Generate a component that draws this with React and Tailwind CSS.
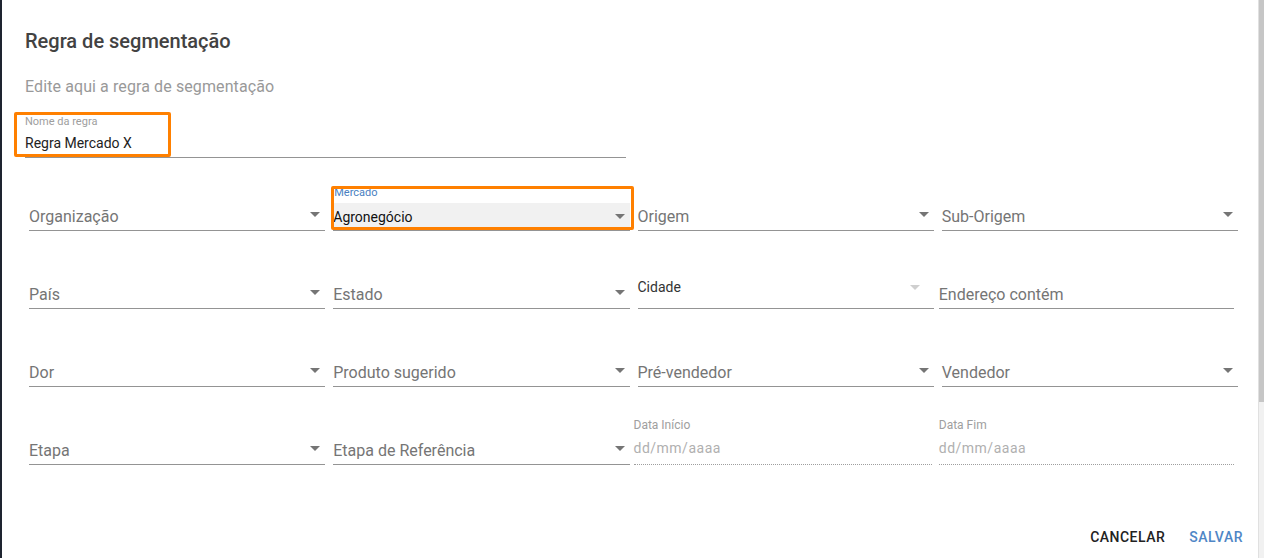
import React from "react";

function Arrow({ light }) {
  return (
    <svg width="10" height="5" viewBox="0 0 10 5" className="shrink-0">
      <path d="M0 0 L10 0 L5 5 Z" fill={light ? "#cfcfcf" : "#757575"} />
    </svg>
  );
}

function Select({ label, className = "" }) {
  return (
    <div className={`h-[47px] flex items-end border-b border-[#949494] ${className}`}>
      <div className="flex-1 flex items-center justify-between pb-[3px] pr-[5px]">
        <span className="text-[16px] leading-[20px] text-[#757575]">{label}</span>
        <span className="-mt-[6px]">
          <Arrow />
        </span>
      </div>
    </div>
  );
}

function DateField({ label, className = "" }) {
  return (
    <div className={`h-[47px] flex flex-col justify-end border-b border-dotted border-[#9e9e9e] ${className}`}>
      <span className="text-[12px] leading-[14px] text-[#9e9e9e]">{label}</span>
      <span className="text-[14px] leading-[18px] text-[#b0b0b0] tracking-[0.5px] mt-[7px] mb-[7px]">
        dd/mm/aaaa
      </span>
    </div>
  );
}

export default function App() {
  return (
    <div
      className="w-[1264px] h-[558px] flex bg-white overflow-hidden"
      style={{ fontFamily: "Roboto, 'Liberation Sans', sans-serif" }}
    >
      <div className="w-[2px] bg-[#1e2430]" />

      <div className="flex-1 flex flex-col pl-[23px] pr-[18px] pt-[28px] relative">
        <h1 className="text-[20px] leading-[26px] font-medium text-[#424242]">Regra de segmentação</h1>
        <p className="text-[16px] leading-[20px] text-[#999] mt-[23px] tracking-[0.1px]">Edite aqui a regra de segmentação</p>

        {/* nome da regra */}
        <div className="relative w-[601px] mt-[12px] h-[49px] flex flex-col justify-end border-b border-[#949494]">
          <span className="text-[11px] leading-[13px] text-[#9e9e9e]">Nome da regra</span>
          <span className="text-[14px] leading-[18px] text-[#222] mt-[6px] mb-[5px]">Regra Mercado X</span>
          <div className="absolute left-[-11px] top-[3px] w-[157px] h-[45px] border-[3px] border-[#ff8000] rounded-[2px]" />
        </div>

        <div className="grid grid-cols-4 gap-x-[8px] gap-y-[31px] ml-[4px] mt-[26px] w-[1209px]">
          <Select label="Organização" />

          <div className="relative h-[47px] flex flex-col justify-end border-b border-[#949494]">
            <span className="text-[11px] leading-[13px] text-[#4a7fc1] pl-[1px]">Mercado</span>
            <div className="bg-[#f1f1f1] h-[27px] mt-[4px] flex items-center justify-between pr-[5px]">
              <span className="text-[14px] leading-[18px] text-[#111]">Agronegócio</span>
              <Arrow />
            </div>
            <div className="absolute left-[-2px] top-[2px] w-[303px] h-[44px] border-[3px] border-[#ff8000] rounded-[2px]" />
          </div>

          <Select label="Origem" />
          <Select label="Sub-Origem" />

          <Select label="País" />
          <Select label="Estado" />
          <div className="h-[47px] flex items-start justify-between border-b border-[#949494] pr-[14px] pt-[16px]">
            <span className="text-[14px] leading-[18px] text-[#333]">Cidade</span>
            <span className="mt-[7px]">
              <Arrow light />
            </span>
          </div>
          <div className="h-[47px] flex items-end border-b border-[#949494] -ml-[3px] mr-[4px]">
            <span className="text-[16px] leading-[20px] text-[#757575] pb-[3px]">Endereço contém</span>
          </div>

          <Select label="Dor" />
          <Select label="Produto sugerido" />
          <Select label="Pré-vendedor" />
          <Select label="Vendedor" />

          <Select label="Etapa" />
          <Select label="Etapa de Referência" />
          <DateField label="Data Início" className="-ml-[4px] mr-[2px]" />
          <DateField label="Data Fim" className="-ml-[3px] mr-[4px]" />
        </div>

        <div className="flex justify-end gap-[24px] mt-[64px] -mr-[3px]">
          <button className="text-[14px] leading-[16px] font-medium tracking-[0.5px] text-[#222]">CANCELAR</button>
          <button className="text-[14px] leading-[16px] font-medium tracking-[0.5px] text-[#4f86c6]">SALVAR</button>
        </div>
      </div>

      {/* scrollbar */}
      <div className="w-[6px] flex flex-col border-l border-[#e0e0e0]">
        <div className="h-[402px] bg-[#c6c6c6]" />
        <div className="flex-1 bg-[#f1f1f1]" />
      </div>
    </div>
  );
}
